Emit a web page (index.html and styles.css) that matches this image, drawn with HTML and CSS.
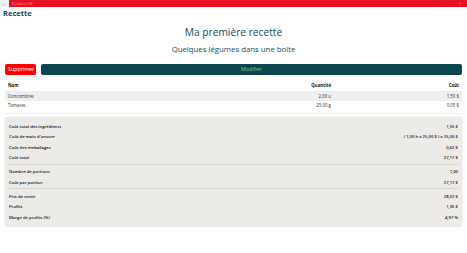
FILE: index.html
```html
<!DOCTYPE html>
<html lang="fr">
<head>
<meta charset="utf-8">
<link rel="stylesheet" href="styles.css">
</head>
<body>
<div class="titlebar">
  <div class="back"><span class="arrow">&#8592;</span></div>
  <div class="bar">
    <span class="apptitle">Recette Lite XX</span>
    <div class="controls"><span>&#8211;</span><span>&#9633;</span><span>&#10005;</span></div>
  </div>
</div>
<div class="apphead">Recette</div>
<h1 class="title">Ma première recette</h1>
<h2 class="subtitle">Quelques légumes dans une boîte</h2>
<div class="actions">
  <button class="btn btn-delete">Supprimer</button>
  <button class="btn btn-edit">Modifier</button>
</div>
<table class="ingredients">
  <thead>
    <tr><th class="c-name">Nom</th><th class="c-qty">Quantité</th><th class="c-cost">Coût</th></tr>
  </thead>
  <tbody>
    <tr class="odd"><td class="c-name">Concombres</td><td class="c-qty">2,00 u</td><td class="c-cost">1,50 $</td></tr>
    <tr><td class="c-name">Tomates</td><td class="c-qty">25,00 g</td><td class="c-cost">0,05 $</td></tr>
  </tbody>
</table>
<div class="card">
  <div class="group">
    <div class="row"><span>Coût total des ingrédients</span><span>1,55 $</span></div>
    <div class="row"><span>Coût de main d'oeuvre</span><span>( 1,00 h x 25,00 $ ) = 25,00 $</span></div>
    <div class="row"><span>Coût des emballages</span><span>0,62 $</span></div>
    <div class="row"><span>Coût total</span><span>27,17 $</span></div>
  </div>
  <div class="group">
    <div class="row"><span>Nombre de portions</span><span>1,00</span></div>
    <div class="row"><span>Coût par portion</span><span>27,17 $</span></div>
  </div>
  <div class="group">
    <div class="row"><span>Prix de vente</span><span>28,52 $</span></div>
    <div class="row"><span>Profits</span><span>1,35 $</span></div>
    <div class="row"><span>Marge de profits (%)</span><span>4,97 %</span></div>
  </div>
</div>
</body>
</html>
```

FILE: styles.css
```css
* { box-sizing: border-box; }
html, body { margin: 0; padding: 0; background: #ffffff; }
body { font-family: "Open Sans", "Noto Sans", sans-serif; color: #111; width: 467px; }

.titlebar { display: flex; height: 7px; }
.back { width: 9px; background: #f2f2f2; display: flex; align-items: center; justify-content: center; }
.arrow { font-size: 4px; line-height: 4px; color: #555; }
.bar { flex: 1; background: #e81123; display: flex; align-items: center; justify-content: space-between; padding-left: 3px; }
.apptitle { font-size: 3px; line-height: 4px; color: #f7a0a6; }
.controls { display: flex; gap: 8px; padding-right: 5px; font-size: 3px; line-height: 4px; color: #f7a0a6; }

.apphead { font-size: 7.5px; font-weight: 700; color: #0c4a5c; padding-left: 3px; line-height: 12px; }

.title { margin: 6px 0 0; text-align: center; font-weight: 400; font-size: 10.2px; line-height: 14px; color: #144a61; }
.subtitle { margin: 4px 0 0; text-align: center; font-weight: 400; font-size: 7.8px; line-height: 12px; color: #144a61; }

.actions { display: flex; gap: 5px; padding: 0 5px; margin-top: 9px; }
.btn { border: none; border-radius: 2px; height: 11px; font-family: "Open Sans", sans-serif; font-size: 5.3px; padding: 0 3px; line-height: 11px; }
.btn-delete { background: #ff0000; color: #ffffff; width: 31px; }
.btn-edit { flex: 1; background: #0b4550; color: #7ed08a; }

.ingredients { width: 457px; margin: 4px 5px 0; border-collapse: collapse; font-size: 4.4px; color: #333; border-bottom: 1px solid #eeeeee; }
.ingredients th, .ingredients td { height: 10px; padding: 0 3px; font-weight: 400; }
.ingredients th { font-weight: 700; height: 12px; color: #111; }
.ingredients .odd { background: #efefef; }
.c-name { text-align: left; }
.c-qty { text-align: right; width: 200px; }
.c-cost { text-align: right; width: 128px; }
.ingredients tbody tr:last-child td { height: 12px; vertical-align: top; padding-top: 1px; }

.card { margin: 3px 5px 0; background: #ecebe8; border-radius: 3px; box-shadow: 0 0 2px rgba(0,0,0,0.12); padding: 3px 3px 4px; font-size: 4.2px; font-weight: 600; }
.group { border-top: 1px solid #d5d4d0; padding: 2px 0 1px; }
.group:first-child { border-top: none; }
.row { display: flex; justify-content: space-between; height: 10.3px; align-items: center; padding: 0 1px; }
```
